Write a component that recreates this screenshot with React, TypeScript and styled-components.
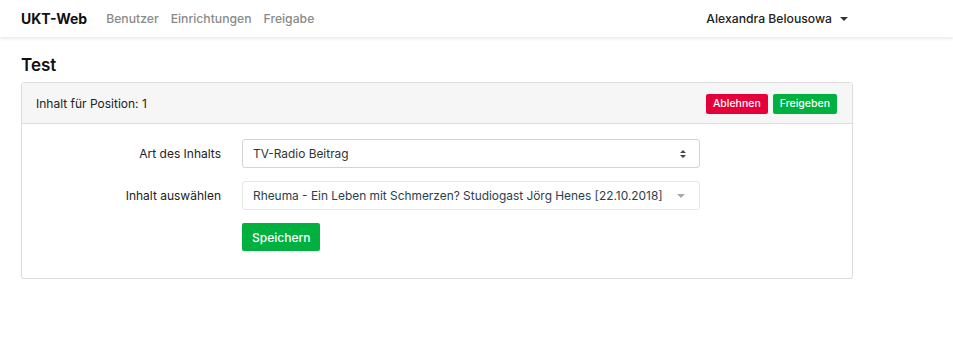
import styled, { createGlobalStyle } from "styled-components";

const GlobalStyle = createGlobalStyle`
  html, body {
    margin: 0;
    padding: 0;
    background: #fff;
    font-family: Inter, "Liberation Sans", sans-serif;
    color: #212529;
  }
  * { box-sizing: border-box; }
`;

const Navbar = styled.header`
  height: 37px;
  background: #fff;
  box-shadow: 0 1px 4px rgba(0, 0, 0, 0.12);
`;

const NavInner = styled.div`
  width: 853px;
  height: 100%;
  padding-left: 21px;
  display: flex;
  align-items: center;
`;

const Brand = styled.span`
  font-size: 14px;
  font-weight: 700;
  color: #111;
  margin-right: 19px;
`;

const NavLinks = styled.nav`
  display: flex;
  gap: 12px;
`;

const NavLink = styled.a`
  font-size: 12.2px;
  font-weight: 500;
  color: #8a8a8a;
  text-decoration: none;
`;

const UserMenu = styled.div`
  margin-left: auto;
  margin-right: 5px;
  display: flex;
  align-items: center;
  gap: 8px;
  font-size: 12.2px;
  font-weight: 500;
  color: #222;
`;

const Caret = styled.span`
  width: 0;
  height: 0;
  border-left: 4px solid transparent;
  border-right: 4px solid transparent;
  border-top: 4px solid #333;
`;

const Main = styled.main`
  width: 853px;
  padding: 17px 0 0 21px;
`;

const Title = styled.h1`
  margin: 0 0 6px;
  font-size: 17px;
  font-weight: 600;
  color: #111;
  line-height: 22px;
`;

const Card = styled.section`
  border: 1px solid #dcdcdc;
  border-radius: 3px;
  box-shadow: 0 1px 1px rgba(0, 0, 0, 0.05);
`;

const CardHeader = styled.div`
  height: 41px;
  padding: 0 15px 0 14px;
  background: #f6f6f6;
  border-bottom: 1px solid #dcdcdc;
  display: flex;
  align-items: center;
  font-size: 12px;
  color: #222;
`;

const HeaderActions = styled.div`
  margin-left: auto;
  display: flex;
  gap: 5px;
  padding-top: 1px;
`;

const Button = styled.button<{ $variant: "danger" | "success"; $size?: "sm" | "md" }>`
  border: none;
  border-radius: 2px;
  font-family: inherit;
  font-weight: 500;
  color: #fff;
  background: ${(p) => (p.$variant === "danger" ? "#e6003a" : "#00b13f")};
  font-size: ${(p) => (p.$size === "md" ? "12px" : "10.5px")};
  height: ${(p) => (p.$size === "md" ? "28px" : "20px")};
  padding: ${(p) => (p.$size === "md" ? "0 10px" : "0 7px")};
  cursor: pointer;
`;

const CardBody = styled.div`
  padding: 15px 0 27px;
  display: flex;
  flex-direction: column;
  gap: 13px;
`;

const FormRow = styled.div`
  display: grid;
  grid-template-columns: 199px 458px;
  column-gap: 21px;
  align-items: center;
`;

const Label = styled.label`
  text-align: right;
  font-size: 12px;
  color: #222;
`;

const SelectBox = styled.div<{ $muted?: boolean }>`
  height: 29px;
  border: 1px solid ${(p) => (p.$muted ? "#e6e6e6" : "#d4d4d4")};
  border-radius: 3px;
  padding: 0 12px 0 10px;
  display: flex;
  align-items: center;
  font-size: 11.9px;
  color: ${(p) => (p.$muted ? "#2c3e50" : "#333")};
  background: #fff;
`;

const SelectText = styled.span`
  flex: 1;
  white-space: nowrap;
  overflow: hidden;
`;

const Arrow = styled.span`
  width: 0;
  height: 0;
  border-left: 4px solid transparent;
  border-right: 4px solid transparent;
  border-top: 4px solid #aaa;
  margin-right: 2px;
`;

const UpDown = () => (
  <svg width="8" height="10" viewBox="0 0 8 10">
    <path d="M4 1 L7 4 H1 Z M4 9 L7 6 H1 Z" fill="#444" />
  </svg>
);

export default function App() {
  return (
    <>
      <GlobalStyle />
      <Navbar>
        <NavInner>
          <Brand>UKT-Web</Brand>
          <NavLinks>
            <NavLink>Benutzer</NavLink>
            <NavLink>Einrichtungen</NavLink>
            <NavLink>Freigabe</NavLink>
          </NavLinks>
          <UserMenu>
            Alexandra Belousowa
            <Caret />
          </UserMenu>
        </NavInner>
      </Navbar>
      <Main>
        <Title>Test</Title>
        <Card>
          <CardHeader>
            Inhalt für Position: 1
            <HeaderActions>
              <Button $variant="danger">Ablehnen</Button>
              <Button $variant="success">Freigeben</Button>
            </HeaderActions>
          </CardHeader>
          <CardBody>
            <FormRow>
              <Label>Art des Inhalts</Label>
              <SelectBox>
                <SelectText>TV-Radio Beitrag</SelectText>
                <UpDown />
              </SelectBox>
            </FormRow>
            <FormRow>
              <Label>Inhalt auswählen</Label>
              <SelectBox $muted>
                <SelectText>Rheuma - Ein Leben mit Schmerzen? Studiogast Jörg Henes [22.10.2018]</SelectText>
                <Arrow />
              </SelectBox>
            </FormRow>
            <FormRow>
              <span />
              <div>
                <Button $variant="success" $size="md">
                  Speichern
                </Button>
              </div>
            </FormRow>
          </CardBody>
        </Card>
      </Main>
    </>
  );
}
